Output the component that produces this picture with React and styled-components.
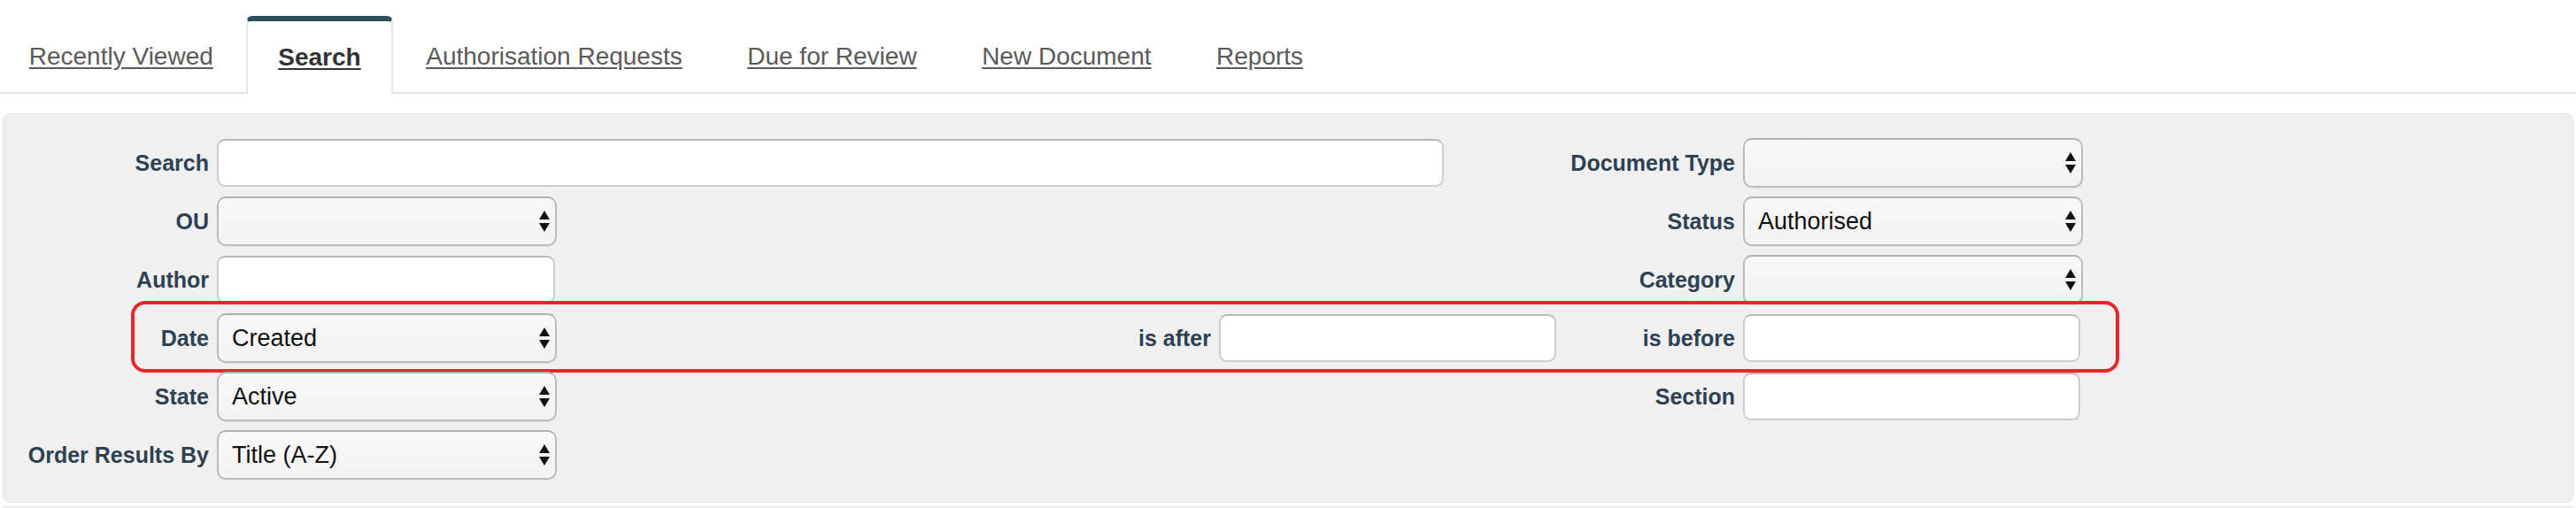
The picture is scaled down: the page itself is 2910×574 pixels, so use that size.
import styled, { createGlobalStyle, css } from 'styled-components';

const GlobalStyle = createGlobalStyle`
  body {
    margin: 0;
    background: #ffffff;
    font-family: 'Liberation Sans', Arial, sans-serif;
  }
`;

const TABS = ['Recently Viewed', 'Search', 'Authorisation Requests', 'Due for Review', 'New Document', 'Reports'];

// label | field | label | field | label | field
const COLUMNS = '241px 384px 748px 381px 211px 384px';

const SelectArrows = () => (
  <Arrows viewBox="0 0 12 24" aria-hidden="true">
    <path d="M0 10 L6 0 L12 10 Z" />
    <path d="M0 14 L12 14 L6 24 Z" />
  </Arrows>
);

const Select = ({ value = '', width = 384 }) => (
  <SelectWrap $width={width}>
    <SelectBox defaultValue={value}>
      <option value={value}>{value}</option>
    </SelectBox>
    <SelectArrows />
  </SelectWrap>
);

const App = () => {
  return (
    <Page>
      <GlobalStyle />
      <TabBar>
        {TABS.map((tab) => (
          <Tab key={tab} $active={tab === 'Search'}>
            <a href="#">{tab}</a>
          </Tab>
        ))}
      </TabBar>

      <Panel>
        <Form>
          <Row>
            <Label $col={1}>Search</Label>
            <TextInput $col="2 / span 2" $width={1386} />
            <Label $col={5}>Document Type</Label>
            <FieldCell $col={6}>
              <Select />
            </FieldCell>
          </Row>

          <Row>
            <Label $col={1}>OU</Label>
            <FieldCell $col={2}>
              <Select />
            </FieldCell>
            <Label $col={5}>Status</Label>
            <FieldCell $col={6}>
              <Select value="Authorised" />
            </FieldCell>
          </Row>

          <Row>
            <Label $col={1}>Author</Label>
            <TextInput $col={2} $width={382} />
            <Label $col={5}>Category</Label>
            <FieldCell $col={6}>
              <Select />
            </FieldCell>
          </Row>

          <Row $highlight>
            <Label $col={1}>Date</Label>
            <FieldCell $col={2}>
              <Select value="Created" />
            </FieldCell>
            <Label $col={3}>is after</Label>
            <TextInput $col={4} $width={381} />
            <Label $col={5}>is before</Label>
            <TextInput $col={6} $width={381} />
          </Row>

          <Row>
            <Label $col={1}>State</Label>
            <FieldCell $col={2}>
              <Select value="Active" />
            </FieldCell>
            <Label $col={5}>Section</Label>
            <TextInput $col={6} $width={381} />
          </Row>

          <Row>
            <Label $col={1}>Order Results By</Label>
            <FieldCell $col={2}>
              <Select value="Title (A-Z)" />
            </FieldCell>
          </Row>
        </Form>
      </Panel>

      <NextPanel />
    </Page>
  );
};

const Page = styled.div`
  width: 2910px;
  height: 574px;
  overflow: hidden;
  background: #ffffff;
`;

const TabBar = styled.nav`
  display: flex;
  align-items: flex-end;
  padding-top: 18px;
  margin-left: -4px;
  border-bottom: 2px solid #e3e3e3;
`;

const Tab = styled.div`
  height: 80px;
  display: flex;
  align-items: center;
  padding: 0 34.75px;
  border: 2px solid transparent;
  border-top-width: 6px;
  border-bottom: none;
  border-radius: 7px 7px 0 0;
  font-size: 28px;

  a {
    color: #5a5a5a;
    text-decoration: underline;
    text-underline-offset: 3px;
  }

  ${({ $active }) =>
    $active &&
    css`
      height: 82px;
      margin-bottom: -2px;
      background: #ffffff;
      border-color: #e6e6e6;
      border-top-color: #2a4f5c;

      a {
        color: #333333;
        font-weight: bold;
      }
    `}
`;

const Panel = styled.section`
  margin: 22px 3px 0;
  background: #f0f0f0;
  border: 1px solid #e4e4e4;
  border-radius: 8px;
`;

const Form = styled.div`
  display: flex;
  flex-direction: column;
  gap: 12px;
  padding: 27px 0 27px;
`;

const Row = styled.div`
  position: relative;
  display: grid;
  grid-template-columns: ${COLUMNS};
  align-items: center;
  height: 54px;

  ${({ $highlight }) =>
    $highlight &&
    css`
      &::after {
        content: '';
        position: absolute;
        left: 144px;
        width: 2246px;
        top: -14px;
        bottom: -13px;
        border: 4px solid #e8262c;
        border-radius: 16px;
        box-sizing: border-box;
        pointer-events: none;
      }
    `}
`;

const Label = styled.label`
  grid-column: ${({ $col }) => $col};
  justify-self: end;
  padding-right: 9px;
  font-size: 25px;
  font-weight: bold;
  color: #2d4152;
  white-space: nowrap;
`;

const FieldCell = styled.div`
  grid-column: ${({ $col }) => $col};
`;

const TextInput = styled.input.attrs({ type: 'text' })`
  grid-column: ${({ $col }) => $col};
  width: ${({ $width }) => $width}px;
  height: 54px;
  box-sizing: border-box;
  background: #ffffff;
  border: 2px solid #cdcdcd;
  border-top-color: #b9b9b9;
  border-radius: 9px;
  outline: none;
`;

const SelectWrap = styled.div`
  position: relative;
  width: ${({ $width }) => $width}px;
  height: 56px;
`;

const SelectBox = styled.select`
  appearance: none;
  width: 100%;
  height: 100%;
  box-sizing: border-box;
  padding: 0 40px 0 15px;
  background: linear-gradient(#f8f8f8, #f3f3f3);
  border: 2px solid #bcbcbc;
  border-top-color: #b0b0b0;
  border-radius: 10px;
  box-shadow: 0 1px 0 rgba(0, 0, 0, 0.06);
  font-family: 'Liberation Sans', Arial, sans-serif;
  font-size: 27px;
  color: #111111;
  outline: none;
`;

const Arrows = styled.svg`
  position: absolute;
  right: 8px;
  top: 50%;
  transform: translateY(-50%);
  width: 12px;
  height: 24px;
  fill: #111111;
  pointer-events: none;
`;

const NextPanel = styled.div`
  margin: 4px 3px 0;
  height: 20px;
  background: #f3f3f3;
  border-top: 1px solid #e6e6e6;
`;

export default App;
